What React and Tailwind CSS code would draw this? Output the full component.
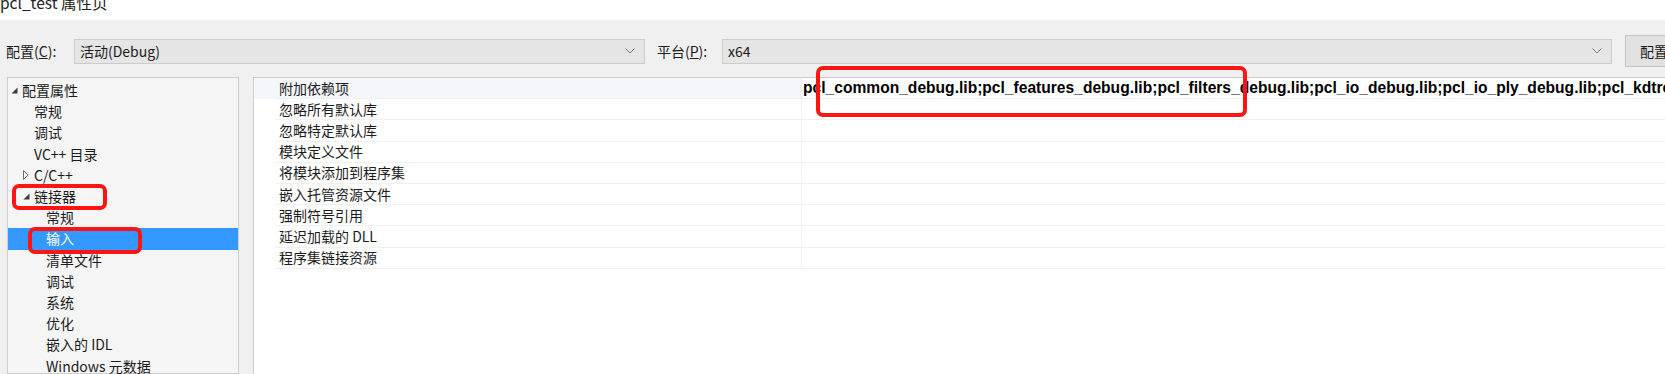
import React from "react";

const FONT = { fontFamily: "'Noto Sans CJK SC', 'Microsoft YaHei', sans-serif" };

function Chevron() {
  return (
    <svg width="10" height="6" viewBox="0 0 10 6" className="shrink-0">
      <polyline points="0.5,0.5 5,5 9.5,0.5" fill="none" stroke="#7a7a7a" strokeWidth="1" />
    </svg>
  );
}

function FilledTri() {
  return (
    <svg width="7" height="7" viewBox="0 0 7 7" className="shrink-0">
      <polygon points="6.5,0.5 6.5,6.5 0.5,6.5" fill="#3c3c3c" />
    </svg>
  );
}

function OpenTri() {
  return (
    <svg width="6" height="10" viewBox="0 0 6 10" className="shrink-0">
      <polygon points="0.5,0.5 5,5 0.5,9.5" fill="none" stroke="#707070" strokeWidth="1" />
    </svg>
  );
}

const tree = [
  { t: "配置属性", lv: 0, tri: "filled" },
  { t: "常规", lv: 1 },
  { t: "调试", lv: 1 },
  { t: "VC++ 目录", lv: 1 },
  { t: "C/C++", lv: 1, tri: "open" },
  { t: "链接器", lv: 1, tri: "filled" },
  { t: "常规", lv: 2 },
  { t: "输入", lv: 2, sel: true },
  { t: "清单文件", lv: 2 },
  { t: "调试", lv: 2 },
  { t: "系统", lv: 2 },
  { t: "优化", lv: 2 },
  { t: "嵌入的 IDL", lv: 2 },
  { t: "Windows 元数据", lv: 2 },
];

const props = [
  "附加依赖项",
  "忽略所有默认库",
  "忽略特定默认库",
  "模块定义文件",
  "将模块添加到程序集",
  "嵌入托管资源文件",
  "强制符号引用",
  "延迟加载的 DLL",
  "程序集链接资源",
];

const deps =
  "pcl_common_debug.lib;pcl_features_debug.lib;pcl_filters_debug.lib;pcl_io_debug.lib;pcl_io_ply_debug.lib;pcl_kdtree_debug.lib;pcl_keypoints_debug.lib;pcl_octree_debug.lib";

export default function App() {
  return (
    <div
      className="relative w-[1665px] h-[374px] overflow-hidden bg-[#f0f0f0] text-[#1b1b1b]"
      style={FONT}
    >
      {/* title bar */}
      <div className="h-[20px] bg-white overflow-hidden">
        <div className="-mt-[10px] text-[15.5px] leading-[24px] text-[#222]">pcl_test 属性页</div>
      </div>

      {/* toolbar */}
      <div className="mt-[15px] mb-[10px] h-[32px] flex items-center text-[14px]">
        <div className="pl-[6px] w-[74px] shrink-0">
          配置(<span className="underline">C</span>):
        </div>
        <div className="w-[571px] h-[25px] shrink-0 flex items-center justify-between bg-[#e5e5e5] border border-[#cccccc] pl-[5px] pr-[9px]">
          <span>活动(Debug)</span>
          <Chevron />
        </div>
        <div className="ml-[12px] w-[65px] shrink-0">
          平台(<span className="underline">P</span>):
        </div>
        <div className="w-[890px] h-[25px] shrink-0 flex items-center justify-between bg-[#e5e5e5] border border-[#cccccc] pl-[5px] pr-[9px]">
          <span>x64</span>
          <Chevron />
        </div>
        <div className="ml-[13px] w-[130px] h-[32px] shrink-0 flex items-center bg-[#e1e1e1] border border-[#c4c4c4] pl-[14px] whitespace-nowrap">
          配置管理器(O)...
        </div>
      </div>

      {/* panels */}
      <div className="flex h-[297px]">
        {/* tree */}
        <div className="ml-[7px] w-[232px] shrink-0 border border-[#cdcdcd] bg-[#f5f5f5] pt-[2px] text-[14px]">
          {tree.map((r, i) => (
            <div
              key={i}
              className={
                "h-[21.2px] flex items-center whitespace-nowrap " +
                (r.sel ? "bg-[#3399ff] text-white" : "")
              }
            >
              <div
                className={
                  "shrink-0 flex items-center " +
                  (r.lv === 0 ? "w-[14px] pl-[3px]" : r.lv === 1 ? "w-[26px] pl-[15px]" : "w-[38px]")
                }
              >
                {r.tri === "filled" && <FilledTri />}
                {r.tri === "open" && <OpenTri />}
              </div>
              <span>{r.t}</span>
            </div>
          ))}
        </div>

        {/* property grid */}
        <div className="ml-[14px] flex-1 border-t border-l border-[#cdcdcd] bg-white text-[14px]">
          {props.map((p, i) => (
            <div key={i} className={"h-[21.2px] flex " + (i === 0 ? "bg-[#f3f6fb]" : "")}>
              <div className="w-[21px] shrink-0" />
              <div className="w-[527px] shrink-0 flex items-center pl-[4px] border-b border-r border-[#f0f0f0] whitespace-nowrap">
                {p}
              </div>
              <div
                className={
                  "flex-1 flex items-center pl-[1px] border-b border-[#f0f0f0] overflow-hidden whitespace-nowrap " +
                  (i === 0 ? "bg-white" : "")
                }
              >
                {i === 0 && (
                  <span
                    className="font-bold text-[15.6px] text-black"
                    style={{ fontFamily: "'Liberation Sans', Arial, sans-serif" }}
                  >
                    {deps}
                  </span>
                )}
              </div>
            </div>
          ))}
        </div>
      </div>

      {/* red annotation boxes */}
      <div className="absolute left-[12px] top-[184px] w-[95px] h-[26px] border-[4px] border-[#ff1414] rounded-[7px]" />
      <div className="absolute left-[28px] top-[227px] w-[114px] h-[27px] border-[4px] border-[#ff1414] rounded-[7px]" />
      <div className="absolute left-[816px] top-[66px] w-[431px] h-[51px] border-[4px] border-[#ff1414] rounded-[7px]" />
    </div>
  );
}
